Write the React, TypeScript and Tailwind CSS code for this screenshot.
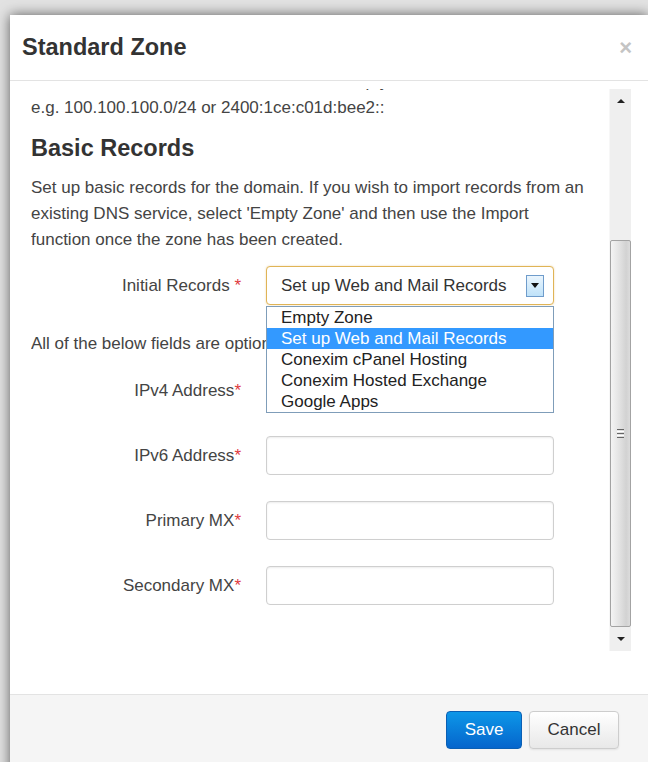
import React from "react";

const options = [
  "Empty Zone",
  "Set up Web and Mail Records",
  "Conexim cPanel Hosting",
  "Conexim Hosted Exchange",
  "Google Apps",
];

function Req() {
  return <span className="text-[#e0393e]">*</span>;
}

function FieldRow({ label, className }: { label: string; className: string }) {
  return (
    <div className={"flex items-center " + className}>
      <div className="w-[210px] text-right text-[#444]">
        {label}
        <Req />
      </div>
      <div className="ml-[25px] h-[39px] w-[288px] rounded-[4px] border border-[#cfcfcf] bg-white shadow-[inset_0_1px_2px_rgba(0,0,0,0.08)]" />
    </div>
  );
}

function Scrollbar() {
  return (
    <div className="flex h-[562px] w-[22px] flex-col bg-[#efefef] border-l border-[#f7f7f7]">
      <div className="flex h-[24px] items-center justify-center">
        <div className="h-0 w-0 border-x-[4px] border-b-[4px] border-x-transparent border-b-[#222]" />
      </div>
      <div className="h-[127px]" />
      <div className="flex flex-1 items-center justify-center rounded-[2px] border border-[#a3a3a3] bg-[linear-gradient(to_right,#f4f4f4,#e2e2e2_45%,#d2d2d2_80%,#dcdcdc)]">
        <div className="flex flex-col gap-[1px]">
          <div className="h-[1px] w-[7px] bg-[#666]" />
          <div className="h-[1px] w-[7px] bg-[#fff]" />
          <div className="h-[1px] w-[7px] bg-[#666]" />
          <div className="h-[1px] w-[7px] bg-[#fff]" />
          <div className="h-[1px] w-[7px] bg-[#666]" />
        </div>
      </div>
      <div className="flex h-[24px] items-center justify-center">
        <div className="h-0 w-0 border-x-[4px] border-t-[4px] border-x-transparent border-t-[#222]" />
      </div>
    </div>
  );
}

export default function App() {
  return (
    <div className="h-[762px] w-[648px] overflow-hidden bg-[#e2e2e2] pl-[10px] pt-[15px] font-['Liberation_Sans',Arial,sans-serif] text-[17px] text-[#444]">
      <div className="flex h-[800px] w-[638px] flex-col bg-white shadow-[0_0_12px_rgba(0,0,0,0.6)]">
        {/* header */}
        <div className="flex h-[66px] items-center justify-between border-b border-[#e3e3e3] pl-[12px] pr-[16px]">
          <h3 className="text-[23.5px] font-bold text-[#333]">Standard Zone</h3>
          <span className="text-[22px] font-bold leading-none text-[#c4c4c4]">×</span>
        </div>

        {/* body */}
        <div className="flex pb-[43px] pl-[21px] pt-[8px]">
          <div className="h-[562px] flex-1 overflow-hidden">
            <div className="-mt-[20px] w-[558px] leading-[26px]">
              <p>Allowed transfer addresses, or leave this empty</p>
              <p>e.g. 100.100.100.0/24 or 2400:1ce:c01d:bee2::</p>
              <h4 className="mt-[12px] text-[23.5px] font-bold leading-[30px] text-[#333]">Basic Records</h4>
              <p className="mt-[12px]">
                Set up basic records for the domain. If you wish to import records from an existing DNS service,
                select 'Empty Zone' and then use the Import function once the zone has been created.
              </p>

              <div className="mt-[13px] flex items-center">
                <div className="w-[210px] text-right text-[#444]">
                  Initial Records <Req />
                </div>
                <div className="relative ml-[25px] w-[288px]">
                  <div className="flex h-[39px] items-center rounded-[4px] border border-[#e0b456] bg-white pl-[14px] pr-[9px] shadow-[0_0_2px_rgba(224,180,86,0.5)]">
                    <span className="flex-1 text-[#333]">Set up Web and Mail Records</span>
                    <div className="flex h-[22px] w-[18px] items-center justify-center border border-[#6f9ccb] bg-[linear-gradient(to_bottom,#eaf5fd,#bfe2f9)]">
                      <div className="h-0 w-0 border-x-[4px] border-t-[5px] border-x-transparent border-t-[#111]" />
                    </div>
                  </div>
                  <ul className="absolute left-0 top-[40px] z-10 w-[288px] border border-[#7f9db9] bg-white leading-[21px] text-[#222]">
                    {options.map((o) => (
                      <li
                        key={o}
                        className={
                          o === "Set up Web and Mail Records"
                            ? "bg-[#3399ff] pl-[14px] text-white"
                            : "pl-[14px]"
                        }
                      >
                        {o}
                      </li>
                    ))}
                  </ul>
                </div>
              </div>

              <p className="mt-[26px]">All of the below fields are optional.</p>

              <FieldRow label="IPv4 Address" className="mt-[14px]" />
              <FieldRow label="IPv6 Address" className="mt-[26px]" />
              <FieldRow label="Primary MX" className="mt-[26px]" />
              <FieldRow label="Secondary MX" className="mt-[26px]" />
            </div>
          </div>
          <Scrollbar />
          <div className="w-[17px]" />
        </div>

        {/* footer */}
        <div className="flex flex-1 justify-end gap-[7px] border-t border-[#e3e3e3] bg-[#f5f5f5] pr-[29px] pt-[16px]">
          <button className="h-[38px] w-[76px] rounded-[4px] border border-[#0a5fb4] bg-[linear-gradient(to_bottom,#0d97e8,#0565cc)] text-[17px] text-white">
            Save
          </button>
          <button className="h-[38px] w-[90px] rounded-[4px] border border-[#cdcdcd] bg-[linear-gradient(to_bottom,#ffffff,#e8e8e8)] text-[17px] text-[#333] shadow-[0_1px_2px_rgba(0,0,0,0.08)]">
            Cancel
          </button>
        </div>
      </div>
    </div>
  );
}
